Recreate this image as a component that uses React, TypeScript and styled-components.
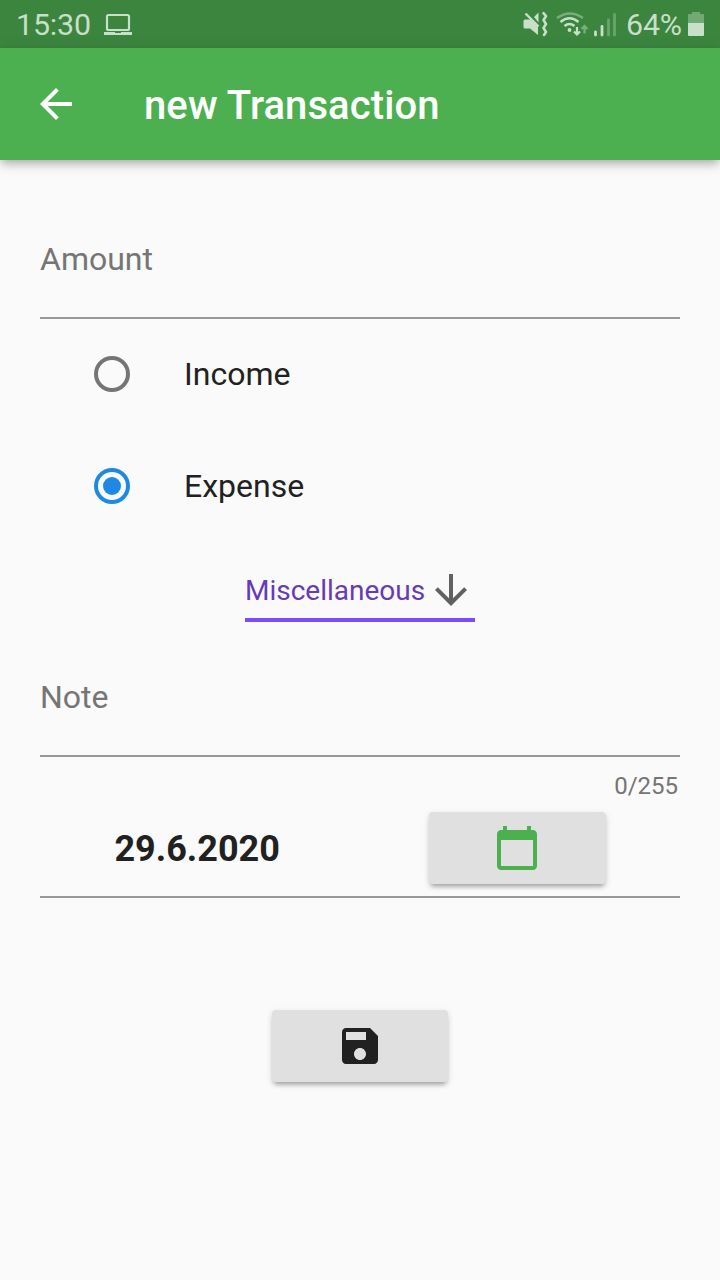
import React from 'react';
import styled, { createGlobalStyle } from 'styled-components';

const GlobalStyle = createGlobalStyle`
  * { box-sizing: border-box; }
  body { margin: 0; background: #fafafa; font-family: Roboto, sans-serif; color: #212121; }
`;

const Screen = styled.div`
  width: 720px;
  height: 1280px;
  overflow: hidden;
  background: #fafafa;
  display: flex;
  flex-direction: column;
`;

const StatusBar = styled.header`
  height: 48px;
  flex: none;
  display: flex;
  align-items: center;
  justify-content: space-between;
  padding: 0 16px;
  background: #3b853f;
  color: #c8dfc9;
`;

const StatusGroup = styled.div<{ $width: number }>`
  display: flex;
  align-items: center;
  width: ${(p) => p.$width}px;
  height: 48px;
`;

const StatusText = styled.span<{ $width: number }>`
  width: ${(p) => p.$width}px;
  font-size: 30.4px;
  line-height: 48px;
  letter-spacing: -0.15px;
  white-space: nowrap;
  padding-top: 1px;
`;

const Glyph = styled.svg`
  display: block;
  flex: none;
`;

const AppBar = styled.div`
  height: 112px;
  flex: none;
  display: flex;
  align-items: center;
  padding-left: 32px;
  background: #4caf50;
  color: #fff;
  box-shadow: 0 4px 8px -2px rgba(0, 0, 0, 0.2), 0 6px 10px rgba(0, 0, 0, 0.1), 0 2px 16px rgba(0, 0, 0, 0.08);
`;

const Title = styled.h1`
  margin: 3px 0 0 64px;
  font-size: 40px;
  font-weight: 500;
  line-height: 48px;
  letter-spacing: 0.1px;
`;

const Form = styled.main`
  display: flex;
  flex-direction: column;
  padding: 0 40px;
`;

const Field = styled.label<{ $top: number; $height: number }>`
  display: block;
  margin-top: ${(p) => p.$top}px;
  height: ${(p) => p.$height}px;
  border-bottom: 2px solid #989898;
  color: #757575;
  font-size: 32px;
  line-height: 38px;
`;

const RadioRow = styled.div`
  display: flex;
  align-items: center;
  height: 112px;
  padding-left: 48px;
  gap: 48px;
  font-size: 32px;
`;

const RadioList = styled.div`
  margin-top: -1px;
`;

const Dropdown = styled.div`
  align-self: center;
  display: flex;
  align-items: center;
  justify-content: space-between;
  width: 230px;
  height: 57px;
  margin-top: 23px;
  padding-bottom: 3px;
  border-bottom: 4px solid #7c4dff;
  color: #673ab7;
  font-size: 28px;
`;

const Counter = styled.div`
  align-self: flex-end;
  margin: 14px 2px 0 0;
  height: 28px;
  line-height: 30px;
  font-size: 24px;
  color: #757575;
`;

const DateRow = styled.div`
  display: flex;
  justify-content: space-around;
  align-items: center;
  height: 99px;
  border-bottom: 2px solid #989898;
`;

const DateText = styled.span`
  font-size: 36px;
  font-weight: 700;
  line-height: 42px;
  padding-top: 2px;
`;

const RaisedButton = styled.button`
  display: flex;
  align-items: center;
  justify-content: center;
  width: 176px;
  height: 72px;
  padding: 0;
  border: 0;
  border-radius: 4px;
  background: #e0e0e0;
  color: #212121;
  box-shadow: 0 5px 4px -3px rgba(0, 0, 0, 0.22), 0 3px 5px rgba(0, 0, 0, 0.13), 0 2px 8px rgba(0, 0, 0, 0.07);
`;

const DateButton = styled(RaisedButton)`
  width: 177px;
`;

const SaveRow = styled.div`
  display: flex;
  justify-content: center;
  margin-top: 112px;
`;

function Icon({ path, color = 'currentColor', size = 48 }: { path: string; color?: string; size?: number }) {
  return (
    <Glyph width={size} height={size} viewBox="0 0 24 24" fill={color}>
      <path d={path} />
    </Glyph>
  );
}

const BACK = 'M20 11H7.83l5.59-5.59L12 4l-8 8 8 8 1.41-1.41L7.83 13H20v-2z';
const DOWN = 'M20 12l-1.41-1.41L13 16.17V4h-2v12.17l-5.58-5.59L4 12l8 8 8-8z';
const CALENDAR =
  'M20 3h-1V1h-2v2H7V1H5v2H4c-1.1 0-2 .9-2 2v16c0 1.1.9 2 2 2h16c1.1 0 2-.9 2-2V5c0-1.1-.9-2-2-2zm0 18H4V8h16v13z';
const SAVE =
  'M17 3H5c-1.11 0-2 .9-2 2v14c0 1.1.89 2 2 2h14c1.1 0 2-.9 2-2V7l-4-4zm-5 16c-1.66 0-3-1.34-3-3s1.34-3 3-3 3 1.34 3 3-1.34 3-3 3zm3-10H5V5h10v4z';

function Radio({ checked }: { checked?: boolean }) {
  const color = checked ? '#1e88e5' : '#757575';
  return (
    <Glyph width={48} height={48} viewBox="0 0 48 48">
      <circle cx={24} cy={24} r={16} fill="none" stroke={color} strokeWidth={4} />
      {checked && <circle cx={24} cy={24} r={9} fill={color} />}
    </Glyph>
  );
}

function Laptop() {
  return (
    <Glyph width={28} height={48} viewBox="0 0 28 48">
      <rect x={3} y={15} width={22} height={15} rx={1.5} fill="none" stroke="currentColor" strokeWidth={2.2} />
      <path d="M0 32h11v1h6v-1h11v3H0z" fill="currentColor" />
    </Glyph>
  );
}

function SignalIcons() {
  return (
    <Glyph width={104} height={48} viewBox="522 0 104 48" fill="none" stroke="currentColor">
      <path d="M525 19.500h5.500l7.500 7v8.500l-8-6.500h-5q-1.500 0-1.500-1.500v-6q0-1.500 1.500-1.500z" fill="currentColor" stroke="none" />
      <path d="M534 17l4.500-4.500v10z" fill="currentColor" stroke="none" />
      <path d="M525.500 13.500l13 13" strokeWidth={2.400} />
      <path d="M543.500 13.200l2.500 3-2.500 3.800 2.500 4-2.500 4 2.500 4-2 3" strokeWidth={2.600} strokeLinejoin="round" strokeLinecap="round" />
      <path d="M557 18q13-9 26 0" strokeWidth={2.400} opacity={0.45} />
      <path d="M560.500 22q9-7.500 18 0" strokeWidth={2.400} />
      <path d="M564.500 26q5-4.200 10 0" strokeWidth={2.400} />
      <circle cx={569.500} cy={30} r={1.900} fill="currentColor" stroke="none" />
      <path d="M577 27v7.500M574 31.500l3 3 3-3" strokeWidth={2.200} />
      <path d="M584.500 33.500v-7M581.500 29l3-3 3 3" strokeWidth={2.200} opacity={0.45} />
      <path d="M595.500 32v3M602 26.500v8.500" strokeWidth={2.800} strokeLinecap="round" />
      <path d="M608.500 20v15M614.500 14.500v20.500" strokeWidth={2.800} strokeLinecap="round" opacity={0.35} />
    </Glyph>
  );
}

function Battery() {
  return (
    <Glyph width={16} height={48} viewBox="0 0 16 48" fill="currentColor">
      <path d="M4 12h8v2h3q1 0 1 1v8H0v-8q0-1 1-1h3z" opacity={0.4} />
      <path d="M0 23h16v12q0 1-1 1H1q-1 0-1-1z" />
    </Glyph>
  );
}

export default function App() {
  return (
    <>
      <GlobalStyle />
      <Screen>
        <StatusBar>
          <StatusGroup $width={116}>
            <StatusText $width={88}>15:30</StatusText>
            <Laptop />
          </StatusGroup>
          <StatusGroup $width={182}>
            <SignalIcons />
            <StatusText $width={62}>64%</StatusText>
            <Battery />
          </StatusGroup>
        </StatusBar>
        <AppBar>
          <Icon path={BACK} />
          <Title>new Transaction</Title>
        </AppBar>
        <Form>
          <Field $top={80} $height={79}>Amount</Field>
          <RadioList>
            <RadioRow><Radio />Income</RadioRow>
            <RadioRow><Radio checked />Expense</RadioRow>
          </RadioList>
          <Dropdown>
            Miscellaneous
            <Icon path={DOWN} color="#616161" />
          </Dropdown>
          <Field $top={56} $height={79}>Note</Field>
          <Counter>0/255</Counter>
          <DateRow>
            <DateText>29.6.2020</DateText>
            <DateButton><Icon path={CALENDAR} color="#4caf50" /></DateButton>
          </DateRow>
          <SaveRow>
            <RaisedButton><Icon path={SAVE} /></RaisedButton>
          </SaveRow>
        </Form>
      </Screen>
    </>
  );
}
